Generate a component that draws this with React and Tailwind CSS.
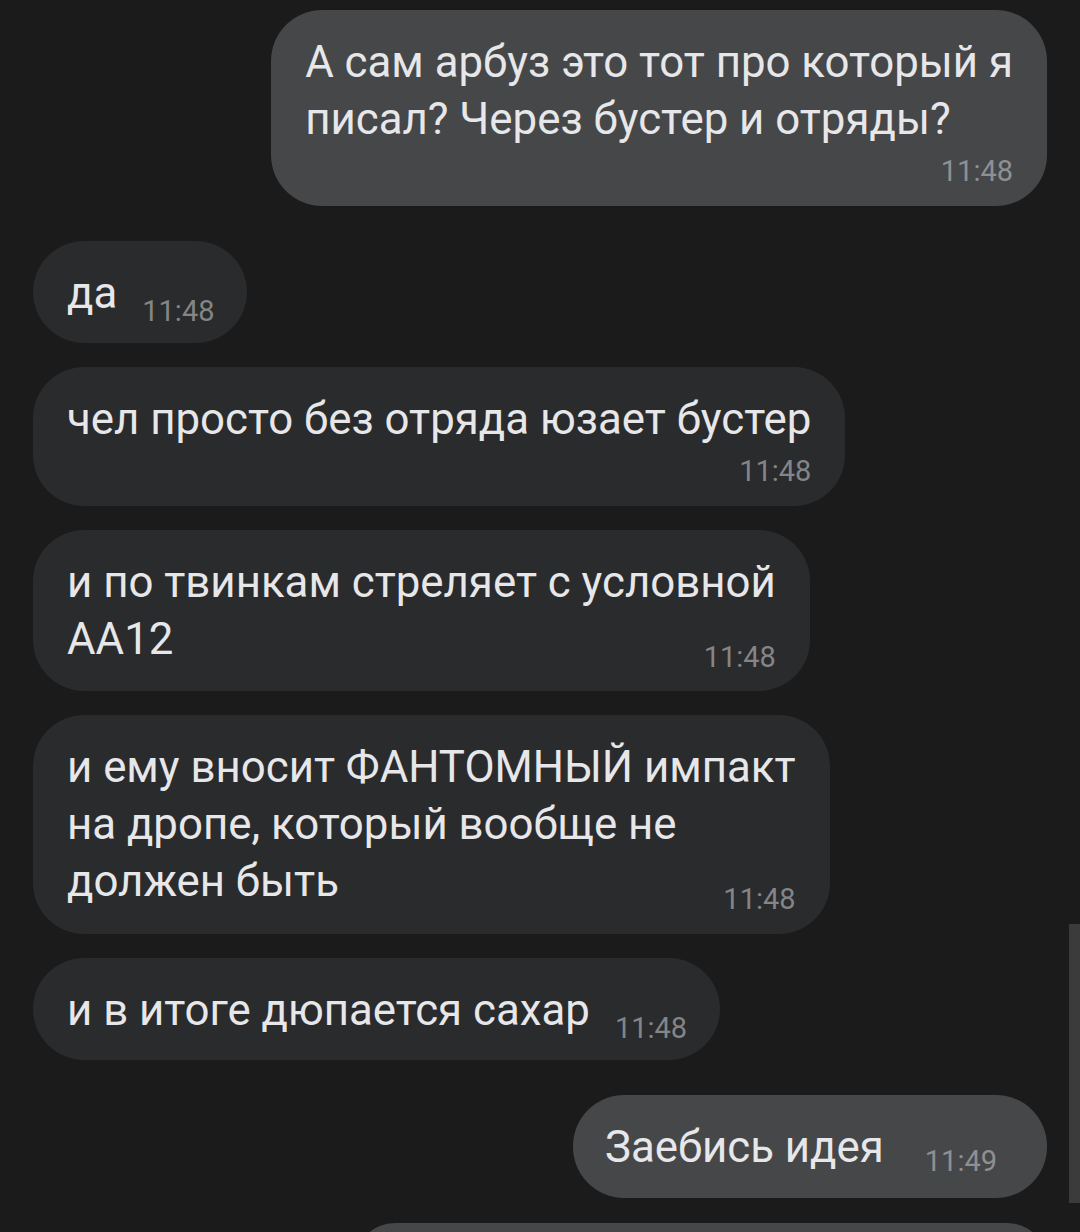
const messages = [
  { id: 1, out: true, lines: ['А сам арбуз это тот про который я', 'писал? Через бустер и отряды?'], time: '11:48', mode: 'below' },
  { id: 2, lines: ['да'], time: '11:48', mode: 'inline' },
  { id: 3, lines: ['чел просто без отряда юзает бустер'], time: '11:48', mode: 'below' },
  { id: 4, lines: ['и по твинкам стреляет с условной', 'АА12'], time: '11:48', mode: 'overlay' },
  { id: 5, lines: ['и ему вносит ФАНТОМНЫЙ импакт', 'на дропе, который вообще не', 'должен быть'], time: '11:48', mode: 'overlay' },
  { id: 6, lines: ['и в итоге дюпается сахар'], time: '11:48', mode: 'inline' },
  { id: 7, out: true, lines: ['Заебись идея'], time: '11:49', mode: 'inline', wide: true },
]

function Bubble({ message }) {
  const { out, lines, time, mode, wide } = message
  const bubble = out ? 'bg-[#464749]' : 'bg-[#2a2b2d]'
  const timeColor = out ? 'text-[#8f9092]' : 'text-[#848587]'
  const text = (
    <div className="whitespace-nowrap text-[43.8px] leading-[57px] text-[#e7e7e9]">
      {lines.map((line, index) => <div key={index}>{line}</div>)}
    </div>
  )
  const stamp = <span className={`text-[29px] leading-[28px] ${timeColor}`}>{time}</span>

  if (mode === 'inline') {
    return (
      <div
        className={`flex w-fit items-end rounded-[51px] pb-[21.5px] pt-[24px] ${bubble} ${
          wide ? 'gap-[41px] pl-[32px] pr-[50px]' : 'gap-[25px] pl-[34px] pr-[33px]'
        }`}
      >
        {text}
        <div className={out ? '-mb-[2px]' : '-mb-[6px]'}>{stamp}</div>
      </div>
    )
  }

  return (
    <div className={`w-fit rounded-[51px] pb-[20.5px] pl-[34px] pr-[34px] pt-[24px] ${bubble}`}>
      {text}
      <div className={`flex justify-end ${mode === 'overlay' ? '-mt-[25px]' : 'mt-[9px]'}`}>{stamp}</div>
    </div>
  )
}

export default function App() {
  return (
    <div className="relative h-[1232px] w-[1080px] overflow-hidden bg-[#1b1b1b] font-['Roboto',sans-serif]">
      <div className="flex flex-col px-[33px] pt-[10px]">
        {messages.map((message, index) => {
          const prev = messages[index - 1]
          const spaced = prev && prev.out !== message.out
          return (
            <div
              key={message.id}
              className={`flex ${message.out ? 'justify-end' : 'justify-start'} ${index === 0 ? '' : spaced ? 'mt-[35px]' : 'mt-[24px]'}`}
            >
              <Bubble message={message} />
            </div>
          )
        })}
        <div className="mt-[25px] flex justify-end">
          <div className="h-[80px] w-[692px] rounded-[51px] bg-[#464749]" />
        </div>
      </div>
      <div className="absolute right-0 top-[924px] h-[279px] w-[11px] bg-[#3b3b3c]" />
    </div>
  )
}
